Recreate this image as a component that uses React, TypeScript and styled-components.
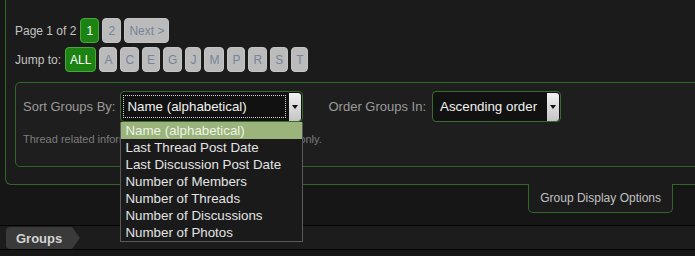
import React from 'react';
import styled, { createGlobalStyle } from 'styled-components';

const letters = ['A', 'C', 'E', 'G', 'J', 'M', 'P', 'R', 'S', 'T'];
const sortOptions = [
  'Name (alphabetical)',
  'Last Thread Post Date',
  'Last Discussion Post Date',
  'Number of Members',
  'Number of Threads',
  'Number of Discussions',
  'Number of Photos',
];

const App = () => {
  return (
    <Page>
      <GlobalStyle />
      <OptionsPanel>
        <NavRow>
          <NavLabel>Page 1 of 2</NavLabel>
          <PageButton active num>1</PageButton>
          <PageButton num>2</PageButton>
          <PageButton>Next &gt;</PageButton>
        </NavRow>
        <NavRow jump>
          <NavLabel>Jump to:</NavLabel>
          <PageButton active>ALL</PageButton>
          {letters.map((l) => (
            <PageButton key={l}>{l}</PageButton>
          ))}
        </NavRow>

        <SortBox>
          <SortRow>
            <FieldLabel>Sort Groups By:</FieldLabel>
            <SelectWrap width={183}>
              <SelectBox>
                <SelectValue focused>Name (alphabetical)</SelectValue>
                <ArrowButton />
              </SelectBox>
              <DropList>
                {sortOptions.map((opt, i) => (
                  <DropItem key={opt} selected={i === 0}>
                    {opt}
                  </DropItem>
                ))}
              </DropList>
            </SelectWrap>
            <FieldLabel spaced>Order Groups In:</FieldLabel>
            <SelectWrap width={129}>
              <SelectBox>
                <SelectValue>Ascending order</SelectValue>
                <ArrowButton />
              </SelectBox>
            </SelectWrap>
          </SortRow>
          <Note>Thread related information is shown for all public groups only.</Note>
        </SortBox>
      </OptionsPanel>

      <TabRow>
        <DisplayTab>Group Display Options</DisplayTab>
      </TabRow>

      <CrumbBar>
        <Crumb>Groups</Crumb>
      </CrumbBar>
    </Page>
  );
};

const GlobalStyle = createGlobalStyle`
  html, body {
    margin: 0;
    padding: 0;
    background: #161616;
    overflow: hidden;
  }
  body {
    font-family: "Liberation Sans", Arial, sans-serif;
  }
`;

const Page = styled.div`
  width: 695px;
  height: 256px;
  overflow: hidden;
`;

const OptionsPanel = styled.div`
  margin-left: 5px;
  width: 760px;
  padding: 18px 0 17px 9px;
  background: #1b1b1b;
  border: 1px solid #2d6827;
  border-top: none;
  border-bottom-left-radius: 6px;
`;

const NavRow = styled.div<{ jump?: boolean }>`
  display: flex;
  align-items: center;
  gap: 3px;
  height: 25px;
  margin-top: ${({ jump }) => (jump ? '4px' : '0')};
`;

const NavLabel = styled.span`
  font-size: 12px;
  color: #c4c4c4;
  margin-right: 1px;
`;

const PageButton = styled.span<{ active?: boolean; num?: boolean }>`
  box-sizing: border-box;
  height: 25px;
  min-width: ${({ num }) => (num ? '19px' : '0')};
  padding: 0 4px;
  display: flex;
  align-items: center;
  justify-content: center;
  font-size: 12px;
  border-radius: 4px;
  background: ${({ active }) => (active ? '#1c8212' : '#bbbbbb')};
  border: 1px solid ${({ active }) => (active ? '#4aa63e' : '#c4c4c4')};
  color: ${({ active }) => (active ? '#ffffff' : '#75869a')};
`;

const SortBox = styled.div`
  box-sizing: border-box;
  margin-top: 10px;
  height: 85px;
  padding: 8px 0 0 7px;
  background: #1e1e1e;
  border: 1px solid #2d6827;
  border-radius: 5px;
`;

const SortRow = styled.div`
  display: flex;
  align-items: center;
`;

const FieldLabel = styled.span<{ spaced?: boolean }>`
  font-size: 13px;
  color: #9a9a9a;
  margin-left: ${({ spaced }) => (spaced ? '25px' : '0')};
  margin-right: ${({ spaced }) => (spaced ? '6px' : '5px')};
`;

const SelectWrap = styled.div<{ width: number }>`
  position: relative;
  width: ${({ width }) => width}px;
`;

const SelectBox = styled.div`
  box-sizing: border-box;
  height: 31px;
  display: flex;
  align-items: center;
  padding: 0 1px 0 3px;
  background: #111111;
  border: 1px solid #3a6c30;
  border-radius: 4px;
`;

const SelectValue = styled.span<{ focused?: boolean }>`
  flex: 1;
  height: 21px;
  line-height: 21px;
  padding-left: ${({ focused }) => (focused ? '3px' : '4px')};
  margin-right: 4px;
  font-size: 13.33px;
  color: #f2f2f2;
  outline: ${({ focused }) => (focused ? '1px dotted #d8d8d8' : 'none')};
  white-space: nowrap;
`;

const ArrowButton = styled.span`
  position: relative;
  width: 12px;
  height: 28px;
  border-radius: 0 3px 3px 0;
  background: linear-gradient(#f2f2f2, #c4c4c4);
  &::after {
    content: '';
    position: absolute;
    left: 3px;
    top: 12px;
    border-left: 3px solid transparent;
    border-right: 3px solid transparent;
    border-top: 4px solid #111111;
  }
`;

const DropList = styled.div`
  position: absolute;
  top: 31px;
  left: 0;
  width: 100%;
  box-sizing: border-box;
  background: #1a1a1a;
  border: 1px solid #5a5a5a;
  border-top: none;
  z-index: 5;
`;

const DropItem = styled.div<{ selected?: boolean }>`
  height: 17px;
  line-height: 18px;
  padding-left: 4px;
  font-size: 13.33px;
  white-space: nowrap;
  background: ${({ selected }) => (selected ? '#9ab47b' : 'transparent')};
  color: ${({ selected }) => (selected ? '#eef3e6' : '#e4e4e4')};
`;

const Note = styled.div`
  margin-top: 11px;
  font-size: 11px;
  color: #7c7c7c;
`;

const TabRow = styled.div`
  display: flex;
  justify-content: flex-end;
  padding-right: 22px;
`;

const DisplayTab = styled.div`
  box-sizing: border-box;
  margin-top: -1px;
  height: 29px;
  padding: 0 11px;
  display: flex;
  align-items: center;
  font-size: 12px;
  color: #c2c2c2;
  background: #1b1b1b;
  border: 1px solid #2d6827;
  border-top: none;
  border-radius: 0 0 5px 5px;
`;

const CrumbBar = styled.div`
  margin-top: 12px;
  height: 23px;
  background: #1c1c1c;
  border-top: 1px solid #050505;
  border-bottom: 1px solid #050505;
`;

const Crumb = styled.div`
  box-sizing: border-box;
  width: 74px;
  height: 22px;
  margin: 1px 0 0 6px;
  padding-left: 10px;
  display: flex;
  align-items: center;
  font-size: 13px;
  font-weight: 700;
  color: #d4d4d4;
  background: #3a3a3a;
  border-radius: 4px 0 0 4px;
  clip-path: polygon(0 0, calc(100% - 8px) 0, 100% 50%, calc(100% - 8px) 100%, 0 100%);
`;

export default App;
